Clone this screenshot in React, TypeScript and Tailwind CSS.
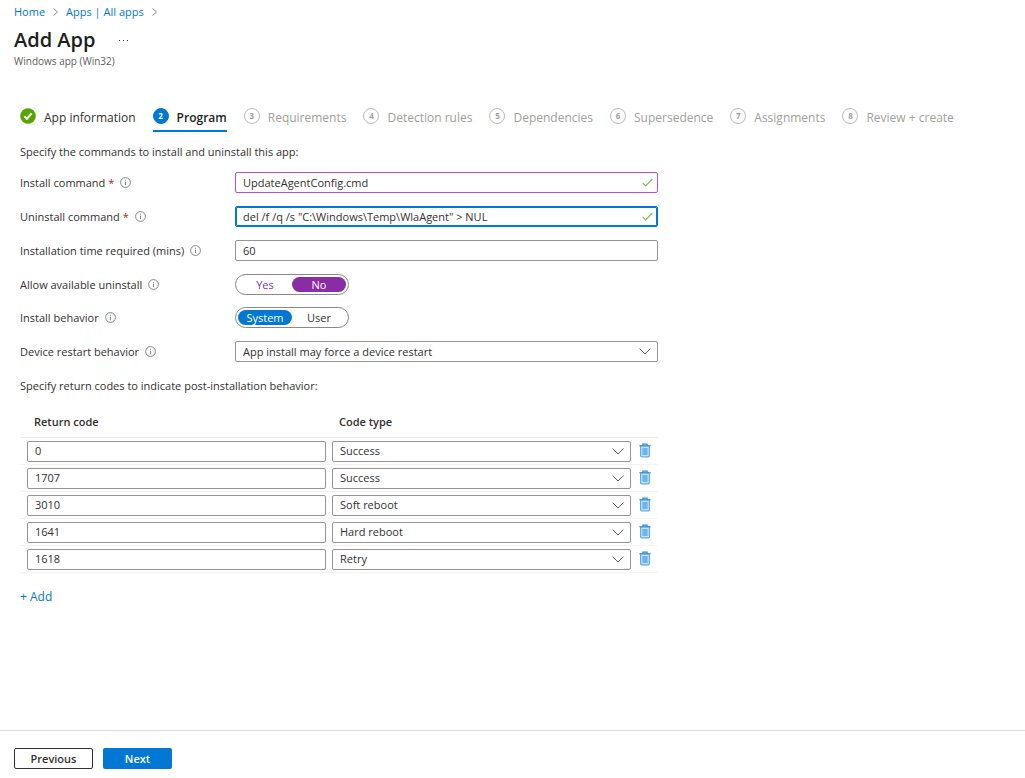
import { useState } from "react";

const steps = [
  "App information",
  "Program",
  "Requirements",
  "Detection rules",
  "Dependencies",
  "Supersedence",
  "Assignments",
  "Review + create",
];

const initialCodes = [
  { code: "0", type: "Success" },
  { code: "1707", type: "Success" },
  { code: "3010", type: "Soft reboot" },
  { code: "1641", type: "Hard reboot" },
  { code: "1618", type: "Retry" },
];

const codeTypes = ["Success", "Soft reboot", "Hard reboot", "Retry", "Failed"];

const borders = {
  plain: "border-[#979593]",
  changed: "border-[#b055c9]",
  focused: "border-[#0078d4] ring-1 ring-[#0078d4] ring-inset",
};

function fieldClass(border: keyof typeof borders) {
  return (
    "block h-[21px] w-full appearance-none rounded-xs border border-solid bg-white px-[7px] text-[11px] leading-[18px] text-[#323130] outline-none " +
    borders[border]
  );
}

function Crumb() {
  return (
    <svg className="h-2 w-[5px]" viewBox="0 0 5 8" fill="none" stroke="#8a8886" aria-hidden="true">
      <path d="M0.5 0.5 4.5 4 0.5 7.5" />
    </svg>
  );
}

function InfoIcon() {
  return (
    <svg className="h-[11px] w-[11px] shrink-0" viewBox="0 0 11 11" fill="none" stroke="#7a7876" strokeWidth="0.9" aria-hidden="true">
      <circle cx="5.5" cy="5.5" r="4.9" />
      <path d="M5.5 4.7v3.4M5.5 2.8v1" />
    </svg>
  );
}

function Tick() {
  return (
    <svg className="pointer-events-none absolute top-[6px] right-[5px] h-[9px] w-[11px]" viewBox="0 0 11 9" fill="none" stroke="#7cbd50" strokeWidth="1.2" aria-hidden="true">
      <path d="M0.6 4.8 3.6 7.8 10.4 1" />
    </svg>
  );
}

function Chevron() {
  return (
    <svg className="pointer-events-none absolute top-[7px] right-[7px] h-[7px] w-3" viewBox="0 0 12 7" fill="none" stroke="#605e5c" strokeWidth="1" aria-hidden="true">
      <path d="M0.6 0.6 6 6 11.4 0.6" />
    </svg>
  );
}

function Trash() {
  return (
    <svg className="h-[15px] w-3" viewBox="0 0 12 15" fill="none" aria-hidden="true">
      <path d="M1.6 3v9.8a1 1 0 0 0 1 1h6.8a1 1 0 0 0 1-1V3z" fill="#c5e2f8" stroke="#5fabe8" strokeWidth="1.2" />
      <path d="M3.4 5h5.2v7H3.4z" fill="#6db3ec" />
      <path d="M0.3 2.7h11.4M3.8 2.5V1.1h4.4v1.4" stroke="#2b8ade" strokeWidth="1.1" />
    </svg>
  );
}

function FieldLabel({ id, text, required }: { id: string; text: string; required?: boolean }) {
  return (
    <div className="flex w-[215px] shrink-0 items-center gap-1.5">
      <label htmlFor={id} id={id + "-label"}>
        {text}
        {required && <span className="text-[#a4262c]"> *</span>}
      </label>
      <InfoIcon />
    </div>
  );
}

function TextBox({ id, label, value, border = "plain" }: { id?: string; label?: string; value: string; border?: keyof typeof borders }) {
  return <input id={id} aria-label={label} defaultValue={value} className={"pb-px " + fieldClass(border)} />;
}

function SelectBox({ id, label, value, options }: { id: string; label?: string; value: string; options: string[] }) {
  return (
    <div className="relative w-full">
      <select id={id} aria-label={label} defaultValue={value} className={fieldClass("plain")}>
        {options.map((o) => (
          <option key={o}>{o}</option>
        ))}
      </select>
      <Chevron />
    </div>
  );
}

function Toggle({ id, options, initial, tone }: { id: string; options: string[]; initial: string; tone: "purple" | "blue" }) {
  const [value, setValue] = useState(initial);
  const on = tone === "purple" ? "bg-[#8a2da5] text-white font-medium" : "bg-[#0078d4] text-white font-medium";
  const off = tone === "purple" ? "text-[#8a2da5]" : "text-[#323130]";
  return (
    <div role="radiogroup" aria-labelledby={id + "-label"} className="relative flex h-[21px] w-[114px] rounded-full border border-[#8a8886] p-[2px]">
      {options.map((o, i) => (
        <label key={o} className={"flex flex-1 items-center justify-center rounded-full " + (value === o ? on : off)}>
          <input
            type="radio"
            id={i === 0 ? id : undefined}
            name={id}
            className="sr-only"
            checked={value === o}
            onChange={() => setValue(o)}
          />
          {o}
        </label>
      ))}
    </div>
  );
}

function StepBadge({ index }: { index: number }) {
  if (index === 0)
    return (
      <svg className="h-4 w-4" viewBox="0 0 16 16" fill="none" aria-hidden="true">
        <circle cx="8" cy="8" r="7.8" fill="#57a300" />
        <path d="M4.4 8.2 7 10.7 11.7 5.3" stroke="#fff" strokeWidth="2" />
      </svg>
    );
  return (
    <span
      className={
        "flex h-4 w-4 items-center justify-center rounded-full border text-[8px] leading-none font-bold " +
        (index === 1 ? "border-[#0078d4] bg-[#0078d4] text-white" : "border-[#bdbbb9] text-[#a19f9d]")
      }
    >
      {index + 1}
    </span>
  );
}

export default function App() {
  const [codes, setCodes] = useState(initialCodes);
  return (
    <div className="flex min-h-screen flex-col bg-white font-['Open_Sans','Noto_Sans',sans-serif] text-[11px] leading-4 text-[#323130]">
      <header className="px-[14px] pt-1">
        <nav aria-label="Breadcrumb" className="flex items-center gap-2 text-[#0078d4]">
          <a href="#home">Home</a>
          <Crumb />
          <a href="#apps">Apps | All apps</a>
          <Crumb />
        </nav>
        <div className="mt-2 flex items-center gap-6">
          <h1 className="text-xl leading-6 font-semibold text-[#201f1e]">Add App</h1>
          <button type="button" aria-label="More" className="flex gap-[3px]">
            <span className="h-px w-px bg-[#323130]" />
            <span className="h-px w-px bg-[#323130]" />
            <span className="h-px w-px bg-[#323130]" />
          </button>
        </div>
        <p className="mt-[1px] text-[10px] text-[#605e5c]">Windows app (Win32)</p>
      </header>

      <main className="flex-1 px-5 pt-[39px]">
        <ol className="flex gap-[17px] text-xs">
          {steps.map((s, i) => (
            <li key={s}>
              <a
                href={"#step-" + (i + 1)}
                className={
                  "flex h-6 items-start gap-2 border-b-2 " +
                  (i === 0
                    ? "border-transparent"
                    : i === 1
                      ? "border-[#0078d4] font-semibold text-[#201f1e]"
                      : "border-transparent text-[#a19f9d]")
                }
              >
                <StepBadge index={i} />
                <span className="pt-[2px]">{s}</span>
              </a>
            </li>
          ))}
        </ol>

        <form className="max-w-[638px]" onSubmit={(e) => e.preventDefault()}>
          <p className="mt-3">Specify the commands to install and uninstall this app:</p>
          <div className="mt-3 flex flex-col gap-[13px]">
            <div className="flex items-center">
              <FieldLabel id="install" text="Install command" required />
              <div className="relative flex-1">
                <TextBox id="install" value="UpdateAgentConfig.cmd" border="changed" />
                <Tick />
              </div>
            </div>
            <div className="flex items-center">
              <FieldLabel id="uninstall" text="Uninstall command" required />
              <div className="relative flex-1">
                <TextBox id="uninstall" value={'del /f /q /s "C:\\Windows\\Temp\\WlaAgent" > NUL'} border="focused" />
                <Tick />
              </div>
            </div>
            <div className="flex items-center">
              <FieldLabel id="time" text="Installation time required (mins)" />
              <div className="flex-1">
                <TextBox id="time" value="60" />
              </div>
            </div>
            <div className="flex items-center">
              <FieldLabel id="available" text="Allow available uninstall" />
              <Toggle id="available" options={["Yes", "No"]} initial="No" tone="purple" />
            </div>
          </div>
          <div className="mt-3 flex flex-col gap-[13px]">
            <div className="flex items-center">
              <FieldLabel id="behavior" text="Install behavior" />
              <Toggle id="behavior" options={["System", "User"]} initial="System" tone="blue" />
            </div>
            <div className="flex items-center">
              <FieldLabel id="restart" text="Device restart behavior" />
              <SelectBox
                id="restart"
                value="App install may force a device restart"
                options={[
                  "App install may force a device restart",
                  "Determine behavior based on return codes",
                  "No specific action",
                ]}
              />
            </div>
          </div>

          <p className="mt-4">Specify return codes to indicate post-installation behavior:</p>
          <table className="mt-3 w-full table-fixed border-collapse text-left">
            <thead>
              <tr className="h-[31px] border-b border-[#edebe9]">
                <th className="w-[306px] pt-[2px] pl-[14px] font-semibold">Return code</th>
                <th className="pt-[2px] pl-[13px] font-semibold">Code type</th>
                <th className="w-[27px]" aria-label="Delete" />
              </tr>
            </thead>
            <tbody>
              {codes.map((c, i) => (
                <tr key={i} className="border-b border-[#f3f2f1]">
                  <td className="pt-[3px] pb-[2px] pl-[7px]">
                    <TextBox label="Return code" value={c.code} />
                  </td>
                  <td className="pt-[3px] pb-[2px] pl-[6px]">
                    <SelectBox id={"type-" + i} label="Code type" value={c.type} options={codeTypes} />
                  </td>
                  <td className="pl-2">
                    <button
                      type="button"
                      aria-label="Delete"
                      className="block"
                      onClick={() => setCodes(codes.filter((x) => x !== c))}
                    >
                      <Trash />
                    </button>
                  </td>
                </tr>
              ))}
            </tbody>
          </table>
          <button
            type="button"
            className="mt-4 text-xs text-[#0078d4]"
            onClick={() => setCodes([...codes, { code: "", type: "Success" }])}
          >
            + Add
          </button>
        </form>
      </main>

      <footer className="flex gap-[10px] border-t border-[#e1dfdd] px-[14px] pt-[17px] pb-[9px] font-semibold">
        <button type="button" className="h-[21px] w-[79px] rounded-xs border border-[#323130]">
          Previous
        </button>
        <button type="button" className="h-[21px] w-[69px] rounded-xs bg-[#0078d4] text-white">
          Next
        </button>
      </footer>
    </div>
  );
}
